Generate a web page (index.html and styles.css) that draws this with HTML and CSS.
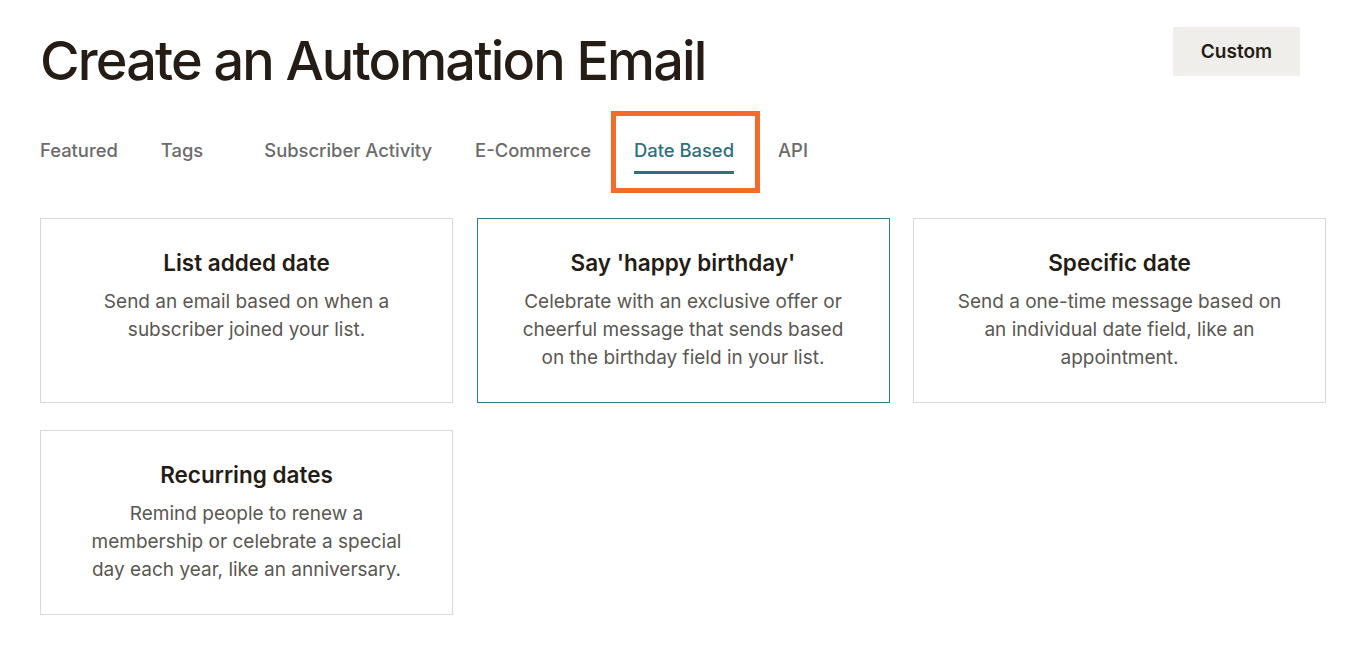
FILE: index.html
```html
<!DOCTYPE html>
<html>
<head>
<meta charset="utf-8">
<link rel="stylesheet" href="styles.css">
</head>
<body>
<div class="page">
  <header class="header">
    <h1 class="title">Create an Automation Email</h1>
    <button class="custom-btn">Custom</button>
  </header>
  <nav class="tabs">
    <span class="tab">Featured</span>
    <span class="tab tab-tags">Tags</span>
    <span class="tab">Subscriber Activity</span>
    <span class="tab">E-Commerce</span>
    <span class="tab tab-active">Date Based</span>
    <span class="tab">API</span>
  </nav>
  <section class="cards">
    <div class="card">
      <h2 class="card-title">List added date</h2>
      <p class="card-desc">Send an email based on when a subscriber joined your list.</p>
    </div>
    <div class="card card-selected">
      <h2 class="card-title">Say 'happy birthday'</h2>
      <p class="card-desc">Celebrate with an exclusive offer or cheerful message that sends based on the birthday field in your list.</p>
    </div>
    <div class="card">
      <h2 class="card-title">Specific date</h2>
      <p class="card-desc">Send a one-time message based on an individual date field, like an appointment.</p>
    </div>
    <div class="card">
      <h2 class="card-title">Recurring dates</h2>
      <p class="card-desc">Remind people to renew a membership or celebrate a special day each year, like an anniversary.</p>
    </div>
  </section>
</div>
</body>
</html>
```
FILE: styles.css
```css
* { box-sizing: border-box; }
html, body { margin: 0; padding: 0; background: #fff; }
body { font-family: Inter, "Noto Sans", sans-serif; color: #241c15; }
.page { padding: 26px 40px 0 40px; width: 1366px; }
.header { display: flex; justify-content: space-between; align-items: flex-start; padding-right: 26px; }
.title { margin: 0; font-size: 54px; font-weight: 500; line-height: 70px; letter-spacing: -1.85px; color: #241c15; }
.custom-btn { margin-top: 1px; width: 127px; height: 49px; border: none; border-radius: 2px; background: #efeeea; font-family: inherit; font-size: 19px; font-weight: 600; color: #241c15; }
.tabs { display: flex; margin-top: 36px; align-items: flex-start; }
.tab { font-size: 18.4px; font-weight: 500; color: #6b6b6b; line-height: 24px; padding-top: 6px; margin-right: 43px; }
.tab-tags { margin-right: 61px; }
.tab-active { position: relative; color: #2f6f7e; padding-bottom: 9px; border-bottom: 3px solid #2f6f7e; margin-right: 44px; }
.tab-active::before { content: ""; position: absolute; left: -23px; right: -26px; top: -21px; bottom: -22px; border: 5px solid #f26b2a; }
.cards { margin-top: 44px; display: grid; grid-template-columns: repeat(3, 413px); column-gap: 23.5px; row-gap: 27px; }
.card { border: 1px solid #d9d9d6; padding: 29px 16px 30px; text-align: center; }
.card-selected { border-color: #2f7d8a; }
.card-title { margin: 0; font-size: 22.5px; font-weight: 600; line-height: 30px; color: #241c15; }
.card-desc { margin: 10px 0 0; font-size: 19px; line-height: 28px; color: #5a5753; padding: 0 20px; }
```
